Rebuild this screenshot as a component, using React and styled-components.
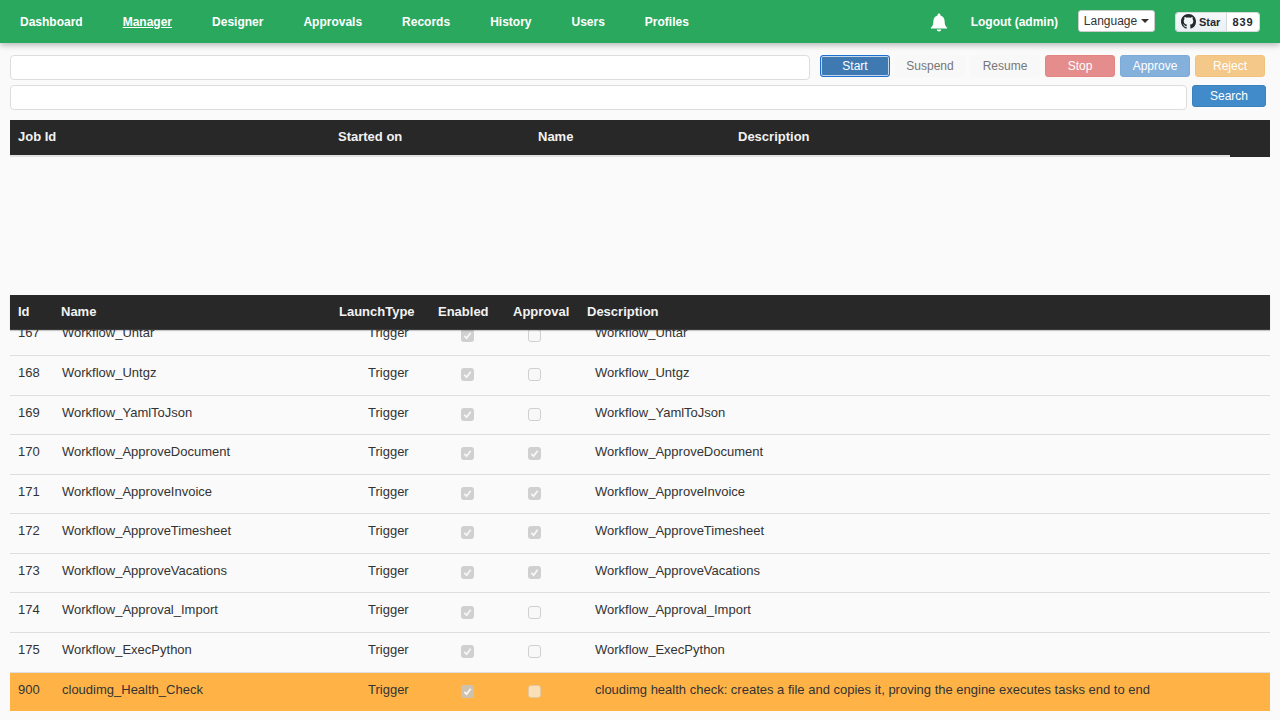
import React from "react";
import styled, { createGlobalStyle } from "styled-components";

const Global = createGlobalStyle`
  html, body { margin: 0; padding: 0; background: #fafafa; height: 720px; overflow: hidden; }
  * { box-sizing: border-box; }
  body { font-family: "Liberation Sans", Arial, sans-serif; font-size: 13px; color: #333; }
`;

const Page = styled.div`
  display: flex;
  flex-direction: column;
  height: 720px;
  overflow: hidden;
`;

const Navbar = styled.nav`
  display: flex;
  align-items: center;
  height: 43px;
  flex: none;
  padding: 0 20px;
  background: #2aa95e;
  box-shadow: 0 2px 6px rgba(0, 0, 0, 0.28);
  position: relative;
  z-index: 2;
`;

const NavLinks = styled.div`
  display: flex;
  gap: 40px;
  flex: 1;
`;

const NavLink = styled.a`
  color: #fff;
  font-size: 12px;
  font-weight: 700;
  text-decoration: ${(p) => (p.$active ? "underline" : "none")};
`;

const Bell = styled.svg`
  width: 18px;
  height: 19px;
  fill: #fff;
  margin-right: 23px;
  margin-top: 1px;
`;

const Logout = styled.span`
  color: #fff;
  font-size: 12px;
  font-weight: 700;
  margin-right: 20px;
`;

const LanguageButton = styled.div`
  display: flex;
  align-items: center;
  justify-content: center;
  gap: 4px;
  width: 77px;
  height: 22px;
  background: #fff;
  border: 1px solid #ccc;
  border-radius: 3px;
  font-size: 12px;
  color: #333;
  margin-right: 20px;
  margin-top: -1px;
`;

const Caret = styled.span`
  border-top: 4px solid #333;
  border-left: 4px solid transparent;
  border-right: 4px solid transparent;
`;

const GitHubBadge = styled.div`
  display: flex;
  width: 85px;
  height: 20px;
  border: 1px solid #d5d8dc;
  border-radius: 3px;
  overflow: hidden;
  font-size: 11px;
  font-weight: 700;
  color: #24292f;
`;

const StarPart = styled.div`
  display: flex;
  align-items: center;
  gap: 3px;
  width: 51px;
  padding-left: 5px;
  background: linear-gradient(#f6f8fa, #ebf0f4);
  border-right: 1px solid #d5d8dc;
`;

const CountPart = styled.div`
  flex: 1;
  display: flex;
  align-items: center;
  justify-content: center;
  background: #fff;
  letter-spacing: 0.8px;
`;

const Content = styled.main`
  display: flex;
  flex-direction: column;
  flex: 1;
  min-height: 0;
  padding: 12px 10px 0;
`;

const ActionRow = styled.div`
  display: flex;
  align-items: flex-start;
  height: 25px;
  margin-right: 5px;
`;

const SearchRow = styled(ActionRow)`
  margin-top: 5px;
  margin-right: 4px;
`;

const TextInput = styled.div`
  height: 25px;
  width: ${(p) => p.$width}px;
  background: #fff;
  border: 1px solid #ddd;
  border-radius: 4px;
  flex: none;
`;

const ButtonGroup = styled.div`
  display: flex;
  gap: 5px;
  margin-left: 10px;
`;

const kinds = {
  start: "background:#3e79b1;color:#fff;border:1px solid #1f6fd0;box-shadow:inset 0 0 0 1px #c4d8ec;",
  plain: "background:#f8f8f8;color:#777;border:1px solid #f8f8f8;",
  stop: "background:#e58d8c;color:#fff;border:1px solid #e28583;",
  approve: "background:#84b1dc;color:#fff;border:1px solid #7dabd8;",
  reject: "background:#f4c888;color:#fff;border:1px solid #f1c27e;",
  search: "background:#428bca;color:#fff;border:1px solid #3a81c0;",
};

const Button = styled.div`
  display: flex;
  align-items: center;
  justify-content: center;
  width: ${(p) => p.$width || 70}px;
  height: 22px;
  border-radius: 3px;
  font-size: 12px;
  ${(p) => kinds[p.$kind]}
`;

const SearchButton = styled(Button)`
  margin-left: 5px;
`;

const DarkHead = styled.div`
  display: grid;
  align-items: center;
  height: 35px;
  padding: 0 0 2px 8px;
  background: #282828;
  color: #f2f2f2;
  font-size: 13px;
  font-weight: 700;
  flex: none;
`;

const JobHeadWrap = styled.div`
  background: #282828;
  margin-top: 10px;
  height: 37px;
  flex: none;
`;

const JobHead = styled(DarkHead)`
  grid-template-columns: 320px 200px 200px 1fr;
`;

const JobDivider = styled.div`
  height: 2px;
  width: 1220px;
  background: #e2e2e2;
`;

const JobBody = styled.div`
  height: 138px;
  flex: none;
`;

const FlowHead = styled(DarkHead)`
  grid-template-columns: 43px 278px 99px 75px 74px 1fr;
  border-bottom: 1px solid #3a3a3a;
  position: relative;
  z-index: 1;
  box-shadow: 0 1px 1px rgba(0, 0, 0, 0.2);
`;

const FlowBody = styled.div`
  height: 381px;
  flex: none;
  overflow: hidden;
  display: flex;
  flex-direction: column;
  justify-content: flex-end;
`;

const FlowRow = styled.div`
  display: grid;
  grid-template-columns: 44px 306px 81px 67px 79px 1fr;
  flex: none;
  height: ${(p) => (p.$highlight ? 38.4 : 39.58)}px;
  padding: 0 0 ${(p) => (p.$highlight ? 5 : 5.7)}px 8px;
  align-items: center;
  background: ${(p) => (p.$highlight ? "#ffb347" : "transparent")};
  border-bottom: ${(p) => (p.$highlight ? "none" : "1px solid #dedede")};
  color: #333;
  font-size: 13px;
`;

const Check = styled.span`
  display: flex;
  align-items: center;
  justify-content: center;
  width: 13px;
  height: 13px;
  margin: ${(p) => (p.$hl ? 4.5 : 4.4)}px 0 0 ${(p) => p.$offset}px;
  border-radius: 3px;
  border: 1px solid ${(p) => (p.$on ? "transparent" : p.$hl ? "#e2c8a0" : "#d0d0d0")};
  background: ${(p) =>
    p.$on ? (p.$hl ? "#cdc2ad" : "#d0d0d0") : p.$hl ? "#fbdfb7" : "#f8f8f8"};
`;

const CheckMark = styled.svg`
  width: 9px;
  height: 9px;
  fill: none;
  stroke: #f7f7f7;
  stroke-width: 2;
`;

const jobColumns = ["Job Id", "Started on", "Name", "Description"];
const flowColumns = ["Id", "Name", "LaunchType", "Enabled", "Approval", "Description"];
const navItems = ["Dashboard", "Manager", "Designer", "Approvals", "Records", "History", "Users", "Profiles"];

const flows = [
  [167, "Workflow_Untar", true, false],
  [168, "Workflow_Untgz", true, false],
  [169, "Workflow_YamlToJson", true, false],
  [170, "Workflow_ApproveDocument", true, true],
  [171, "Workflow_ApproveInvoice", true, true],
  [172, "Workflow_ApproveTimesheet", true, true],
  [173, "Workflow_ApproveVacations", true, true],
  [174, "Workflow_Approval_Import", true, false],
  [175, "Workflow_ExecPython", true, false],
];

function CheckBox({ on, hl, offset }) {
  return (
    <Check $on={on} $hl={hl} $offset={offset}>
      {on && (
        <CheckMark viewBox="0 0 10 10">
          <path d="M1.5 5.5 L4 8 L8.5 2" />
        </CheckMark>
      )}
    </Check>
  );
}

function Row({ id, name, enabled, approval, description, highlight }) {
  return (
    <FlowRow $highlight={highlight}>
      <span>{id}</span>
      <span>{name}</span>
      <span>Trigger</span>
      <CheckBox on={enabled} hl={highlight} offset={12} />
      <CheckBox on={approval} hl={highlight} offset={12} />
      <span>{description}</span>
    </FlowRow>
  );
}

export default function App() {
  return (
    <Page>
      <Global />
      <Navbar>
        <NavLinks>
          {navItems.map((n) => (
            <NavLink key={n} $active={n === "Manager"}>{n}</NavLink>
          ))}
        </NavLinks>
        <Bell viewBox="0 0 18 19">
          <path d="M9 0.5c-.8 0-1.4.6-1.4 1.4v.5C5 3 3.4 5.2 3.4 8c0 3.6-.8 5-2.4 6.6-.4.4-.2 1 .4 1h15.2c.6 0 .8-.6.4-1C15.4 13 14.6 11.6 14.6 8c0-2.8-1.6-5-4.2-5.6v-.5c0-.8-.6-1.4-1.4-1.4z" />
          <path d="M6.8 16.6c0 1.1 1 2 2.2 2s2.2-.9 2.2-2z" />
        </Bell>
        <Logout>Logout (admin)</Logout>
        <LanguageButton>Language <Caret /></LanguageButton>
        <GitHubBadge>
          <StarPart>
            <svg width="15" height="15" viewBox="0 0 16 16" fill="#24292f">
              <path d="M8 0C3.58 0 0 3.58 0 8c0 3.54 2.29 6.53 5.47 7.59.4.07.55-.17.55-.38 0-.19-.01-.82-.01-1.49-2.01.37-2.53-.49-2.69-.94-.09-.23-.48-.94-.82-1.13-.28-.15-.68-.52-.01-.53.63-.01 1.08.58 1.23.82.72 1.21 1.87.87 2.33.66.07-.52.28-.87.51-1.07-1.78-.2-3.64-.89-3.64-3.95 0-.87.31-1.59.82-2.15-.08-.2-.36-1.02.08-2.12 0 0 .67-.21 2.2.82.64-.18 1.32-.27 2-.27s1.36.09 2 .27c1.53-1.04 2.2-.82 2.2-.82.44 1.1.16 1.92.08 2.12.51.56.82 1.27.82 2.15 0 3.07-1.87 3.75-3.65 3.95.29.25.54.73.54 1.48 0 1.07-.01 1.93-.01 2.2 0 .21.15.46.55.38A8.01 8.01 0 0 0 16 8c0-4.42-3.58-8-8-8z" />
            </svg>
            Star
          </StarPart>
          <CountPart>839</CountPart>
        </GitHubBadge>
      </Navbar>
      <Content>
        <ActionRow>
          <TextInput $width={800} />
          <ButtonGroup>
            <Button $kind="start">Start</Button>
            <Button $kind="plain">Suspend</Button>
            <Button $kind="plain">Resume</Button>
            <Button $kind="stop">Stop</Button>
            <Button $kind="approve">Approve</Button>
            <Button $kind="reject">Reject</Button>
          </ButtonGroup>
        </ActionRow>
        <SearchRow>
          <TextInput $width={1177} />
          <SearchButton $kind="search" $width={74}>Search</SearchButton>
        </SearchRow>
        <JobHeadWrap>
          <JobHead>
            {jobColumns.map((c) => <span key={c}>{c}</span>)}
          </JobHead>
          <JobDivider />
        </JobHeadWrap>
        <JobBody />
        <FlowHead>
          {flowColumns.map((c) => <span key={c}>{c}</span>)}
        </FlowHead>
        <FlowBody>
          {flows.map(([id, name, en, ap]) => (
            <Row key={id} id={id} name={name} enabled={en} approval={ap} description={name} />
          ))}
          <Row
            id={900}
            name="cloudimg_Health_Check"
            enabled
            approval={false}
            highlight
            description="cloudimg health check: creates a file and copies it, proving the engine executes tasks end to end"
          />
        </FlowBody>
      </Content>
    </Page>
  );
}
